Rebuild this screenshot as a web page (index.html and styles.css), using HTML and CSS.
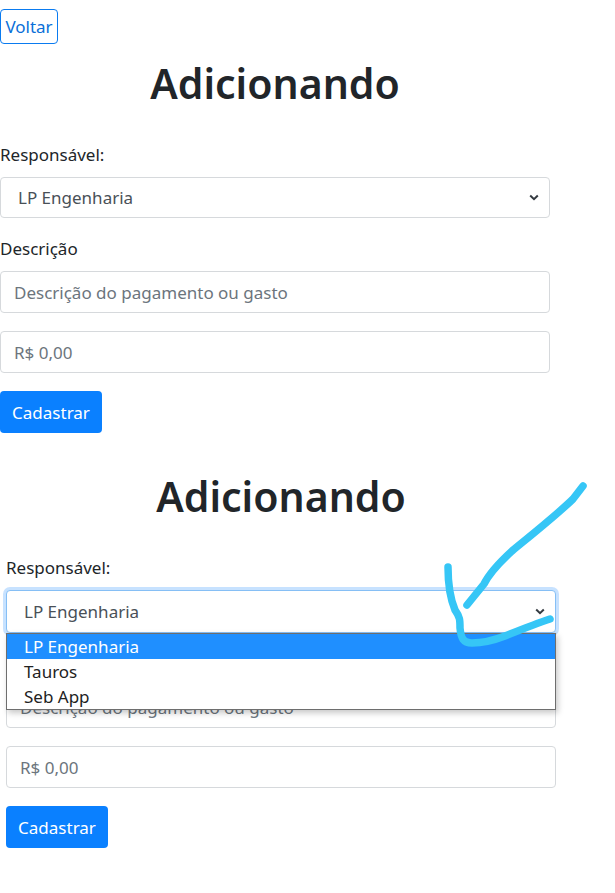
FILE: index.html
```html
<!DOCTYPE html>
<html lang="pt-BR">
<head>
<meta charset="utf-8">
<title>Adicionando</title>
<link rel="stylesheet" href="styles.css">
</head>
<body>
<div class="page">
  <section class="screen">
    <a class="btn btn-outline">Voltar</a>
    <h1 class="title">Adicionando</h1>
    <form class="form">
      <div class="group">
        <label class="label">Responsável:</label>
        <div class="select-wrap">
          <div class="select">
            <span class="select-value">LP Engenharia</span>
            <svg class="chevron" width="10" height="7" viewBox="0 0 10 7"><path d="M1.2 1.5 L5 5.2 L8.8 1.5" fill="none" stroke="#343a40" stroke-width="2"/></svg>
          </div>
        </div>
      </div>
      <div class="group">
        <label class="label">Descrição</label>
        <div class="input"><span class="placeholder">Descrição do pagamento ou gasto</span></div>
      </div>
      <div class="group">
        <div class="input"><span class="placeholder">R$ 0,00</span></div>
      </div>
      <a class="btn btn-primary">Cadastrar</a>
    </form>
  </section>

  <section class="screen screen-second">
    <h1 class="title">Adicionando</h1>
    <form class="form">
      <div class="group">
        <label class="label">Responsável:</label>
        <div class="select-wrap">
          <div class="select select-focus">
            <span class="select-value">LP Engenharia</span>
            <svg class="chevron" width="10" height="7" viewBox="0 0 10 7"><path d="M1.2 1.5 L5 5.2 L8.8 1.5" fill="none" stroke="#343a40" stroke-width="2"/></svg>
          </div>
          <ul class="dropdown">
            <li class="option option-active">LP Engenharia</li>
            <li class="option">Tauros</li>
            <li class="option">Seb App</li>
          </ul>
        </div>
      </div>
      <div class="group">
        <label class="label label-covered">Descrição</label>
        <div class="input"><span class="placeholder">Descrição do pagamento ou gasto</span></div>
      </div>
      <div class="group">
        <div class="input"><span class="placeholder">R$ 0,00</span></div>
      </div>
      <a class="btn btn-primary">Cadastrar</a>
    </form>
  </section>

  <svg class="scribble" width="615" height="893" viewBox="0 0 615 893">
    <path d="M583 486 L573 499 C560 512 540 528 512 551 C500 562 490 572 484 584 L467 605" fill="none" stroke="#36c6f6" stroke-width="7.5" stroke-linecap="round" stroke-linejoin="round"/>
    <path d="M448 567 C448 580 450 598 455 610 C460 617 460 620 460 628 C461 638 463 643 472 643 C482 643 492 641 505 636 C520 630 535 624 550 619" fill="none" stroke="#36c6f6" stroke-width="7.5" stroke-linecap="round" stroke-linejoin="round"/>
  </svg>
</div>
</body>
</html>
```

FILE: styles.css
```css
* { box-sizing: border-box; }

body {
  margin: 0;
  background: #fff;
  font-family: "Noto Sans", "Open Sans", sans-serif;
  color: #212529;
}

.page {
  position: relative;
  width: 615px;
  min-height: 893px;
}

.screen {
  width: 550px;
  display: flex;
  flex-direction: column;
  align-items: flex-start;
}

.screen-second {
  margin-left: 6px;
}

.btn {
  display: inline-flex;
  align-items: center;
  justify-content: center;
  border-radius: 4px;
  font-size: 17px;
  text-decoration: none;
}

.btn-outline {
  margin-top: 9px;
  height: 35px;
  width: 58px;
  border: 1px solid #0a7bf0;
  color: #0a6fd8;
}

.btn-primary {
  height: 42px;
  width: 102px;
  background: #0a80ff;
  color: #fff;
}

.title {
  align-self: stretch;
  margin: 13px 0 32px;
  font-size: 41px;
  line-height: 53px;
  font-weight: 600;
  text-align: center;
  color: #212529;
}

.screen-second .title {
  margin-top: 37px;
}

.form {
  align-self: stretch;
  display: flex;
  flex-direction: column;
  align-items: flex-start;
}

.group {
  align-self: stretch;
  margin-bottom: 18px;
}

.label {
  display: block;
  font-size: 17px;
  line-height: 26px;
  margin-bottom: 9px;
  color: #212529;
}

.label-covered {
  visibility: hidden;
}

.select-wrap {
  position: relative;
}

.select {
  height: 41px;
  border: 1px solid #d6d9dc;
  border-radius: 4px;
  display: flex;
  align-items: center;
  justify-content: space-between;
  padding: 0 10px 0 17px;
  font-size: 17px;
  color: #495057;
  background: #fff;
}

.select-focus {
  height: 43px;
  border-color: #86bff5;
  box-shadow: 0 0 0 3px rgba(0, 123, 255, 0.22);
}

.chevron {
  display: block;
}

.input {
  height: 42px;
  border: 1px solid #d6d9dc;
  border-radius: 4px;
  display: flex;
  align-items: center;
  padding: 0 13px;
  font-size: 17px;
}

.placeholder {
  color: #6c757d;
}

.dropdown {
  position: absolute;
  top: 100%;
  left: 0;
  right: 0;
  margin: 0;
  padding: 0;
  list-style: none;
  background: #fff;
  border: 1px solid #6e6e6e;
  box-shadow: 2px 3px 6px rgba(0, 0, 0, 0.22);
  z-index: 2;
}

.option {
  height: 25px;
  line-height: 25px;
  padding-left: 17px;
  font-size: 17px;
  color: #222;
}

.option-active {
  background: #1f8fff;
  color: #fff;
}

.scribble {
  position: absolute;
  top: 0;
  left: 0;
  pointer-events: none;
  z-index: 5;
}
```
